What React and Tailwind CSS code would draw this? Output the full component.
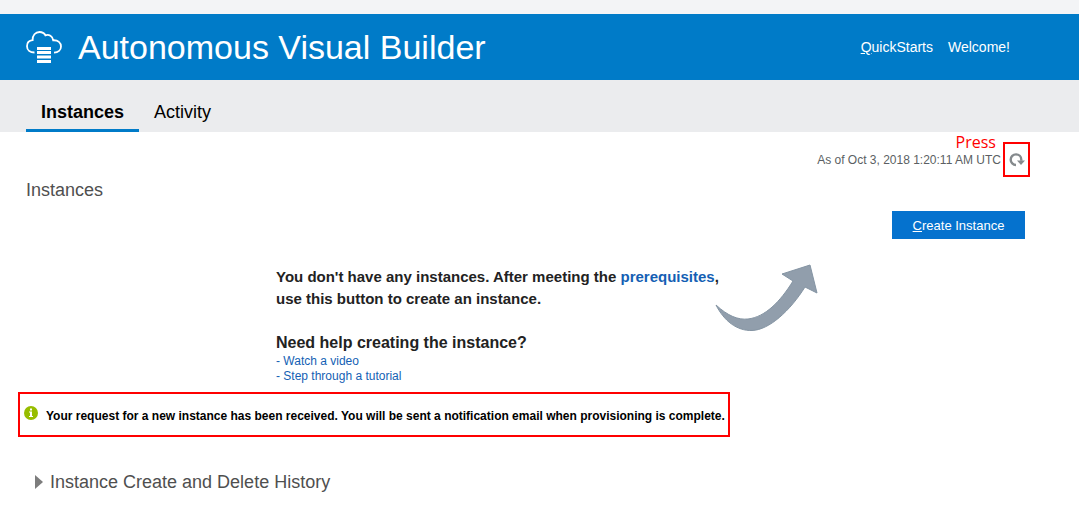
function CloudLogo() {
  return (
    <svg className="h-[34px] w-[38px] shrink-0" viewBox="0 0 38 34" fill="none" aria-hidden="true">
      <path
        d="M9.500 22.500C5 22.500 2 20 2 16.200c0-3.400 2.300-5.600 5.600-6C7.400 5.200 10.400 2 14.600 2c2.600 0 4.700 1.300 5.800 3.300 3.600-1.200 7.200.9 7.800 5 4.800-.3 7.800 2.300 7.800 6.200 0 3.500-2.800 5.900-7 6.100"
        stroke="white"
        strokeWidth="1.800"
      />
      <path d="M12 17h14v3H12zM12 21h14v3H12zM12 25.500h14v3H12zM12 30h14v3H12z" fill="white" />
    </svg>
  );
}

function RefreshIcon() {
  return (
    <svg className="h-4 w-4" viewBox="0 0 16 16" fill="none" aria-hidden="true">
      <path d="M7 13A5.300 5.300 0 1 1 12.300 7.700v1" stroke="#858a8d" strokeWidth="2.400" />
      <path d="M8 8.500H16L12 13z" fill="#858a8d" />
    </svg>
  );
}

function CurvedArrow() {
  return (
    <svg className="h-[68px] w-[103px] shrink-0" viewBox="0 0 103 68" aria-hidden="true">
      <path
        d="M1 41C13 52 23 56 33 55C50 53 65 38 78 17L67 10L95 1L102 29L90 23C75 47 54 66 37 66.500C22 67 9 57 1 41Z"
        fill="#919eac"
        stroke="#8494a3"
      />
    </svg>
  );
}

function InfoIcon() {
  return (
    <svg className="h-[14px] w-[14px] shrink-0" viewBox="0 0 14 14" aria-hidden="true">
      <circle cx="7" cy="7" r="7" fill="#97bd00" />
      <path d="M6 2.500h2v2H6zM5 5.500h3v4.500h1V11H5v-1h1V6.500H5z" fill="white" />
    </svg>
  );
}

export default function App() {
  return (
    <div className="min-h-screen bg-white font-['Liberation_Sans',Arial,sans-serif]">
      <div className="h-[14px] bg-[#f3f4f6]" />
      <header className="flex h-[66px] items-center justify-between bg-[#007bc8] pr-[69px] pl-[25px] text-white">
        <div className="flex items-center gap-[15px]">
          <CloudLogo />
          <h1 className="text-[34px] leading-10 whitespace-nowrap">Autonomous Visual Builder</h1>
        </div>
        <div className="flex gap-[15px] text-sm whitespace-nowrap">
          <a href="#quickstarts"><span className="underline">Q</span>uickStarts</a>
          <a href="#welcome">Welcome!</a>
        </div>
      </header>
      <nav className="flex h-[52px] items-end bg-[#ebecee] pl-[26px] text-lg text-black">
        <a href="#instances" aria-current="page" className="border-b-[3px] border-[#007bc8] px-[15px] pb-[3px] font-bold">
          Instances
        </a>
        <a href="#activity" className="border-b-[3px] border-transparent px-[15px] pb-[3px]">Activity</a>
      </nav>
      <main className="pt-[10px] pl-[26px]">
        <div className="relative flex h-[35px] items-center justify-end gap-[2px] pr-[49px]">
          <span className="text-xs text-[#5b5f63]">As of Oct 3, 2018 1:20:11 AM UTC</span>
          <button type="button" aria-label="Refresh" className="flex h-[35px] w-[27px] items-center justify-center border-2 border-[#ff0000]">
            <RefreshIcon />
          </button>
          <span className="absolute -top-3 right-[83px] font-['Open_Sans',sans-serif] text-base text-[#ff0000]">Press</span>
        </div>
        <h2 className="pt-px text-lg leading-6 text-[#4f4f4f]">Instances</h2>
        <div className="mt-[9px] flex justify-end pr-[54px]">
          <button type="button" className="h-7 w-[133px] bg-[#0572ce] pt-px text-[13px] text-white">
            <span className="underline">C</span>reate Instance
          </button>
        </div>
        <section className="mt-[25px] flex items-start gap-px pl-[250px]">
          <div className="w-[438px]">
            <p className="pt-[2px] text-[15px] leading-[22px] font-bold whitespace-nowrap text-[#222222]">
              You don't have any instances. After meeting the{" "}
              <a href="#prerequisites" className="text-[#145fb4]">prerequisites</a>,<br />
              use this button to create an instance.
            </p>
            <h3 className="mt-[22px] text-base leading-[22px] font-bold text-[#222222]">Need help creating the instance?</h3>
            <ul className="text-xs leading-[15px] text-[#145fb4]">
              <li><a href="#video">- Watch a video</a></li>
              <li><a href="#tutorial">- Step through a tutorial</a></li>
            </ul>
          </div>
          <CurvedArrow />
        </section>
        <div role="status" className="mt-2 -ml-2 flex h-[45px] w-[712px] items-start gap-2 border-2 border-[#ff0000] pt-3 pl-1">
          <InfoIcon />
          <p className="text-xs leading-5 font-bold whitespace-nowrap text-black">
            Your request for a new instance has been received. You will be sent a notification email when provisioning is complete.
          </p>
        </div>
        <button type="button" className="mt-[33px] ml-[9px] flex items-center gap-[7px] text-lg leading-6 text-[#4f4f4f]">
          <svg className="h-[14px] w-2" viewBox="0 0 8 14" aria-hidden="true"><path d="M0 0L8 7L0 14Z" fill="#7d7d7d" /></svg>
          Instance Create and Delete History
        </button>
      </main>
    </div>
  );
}
